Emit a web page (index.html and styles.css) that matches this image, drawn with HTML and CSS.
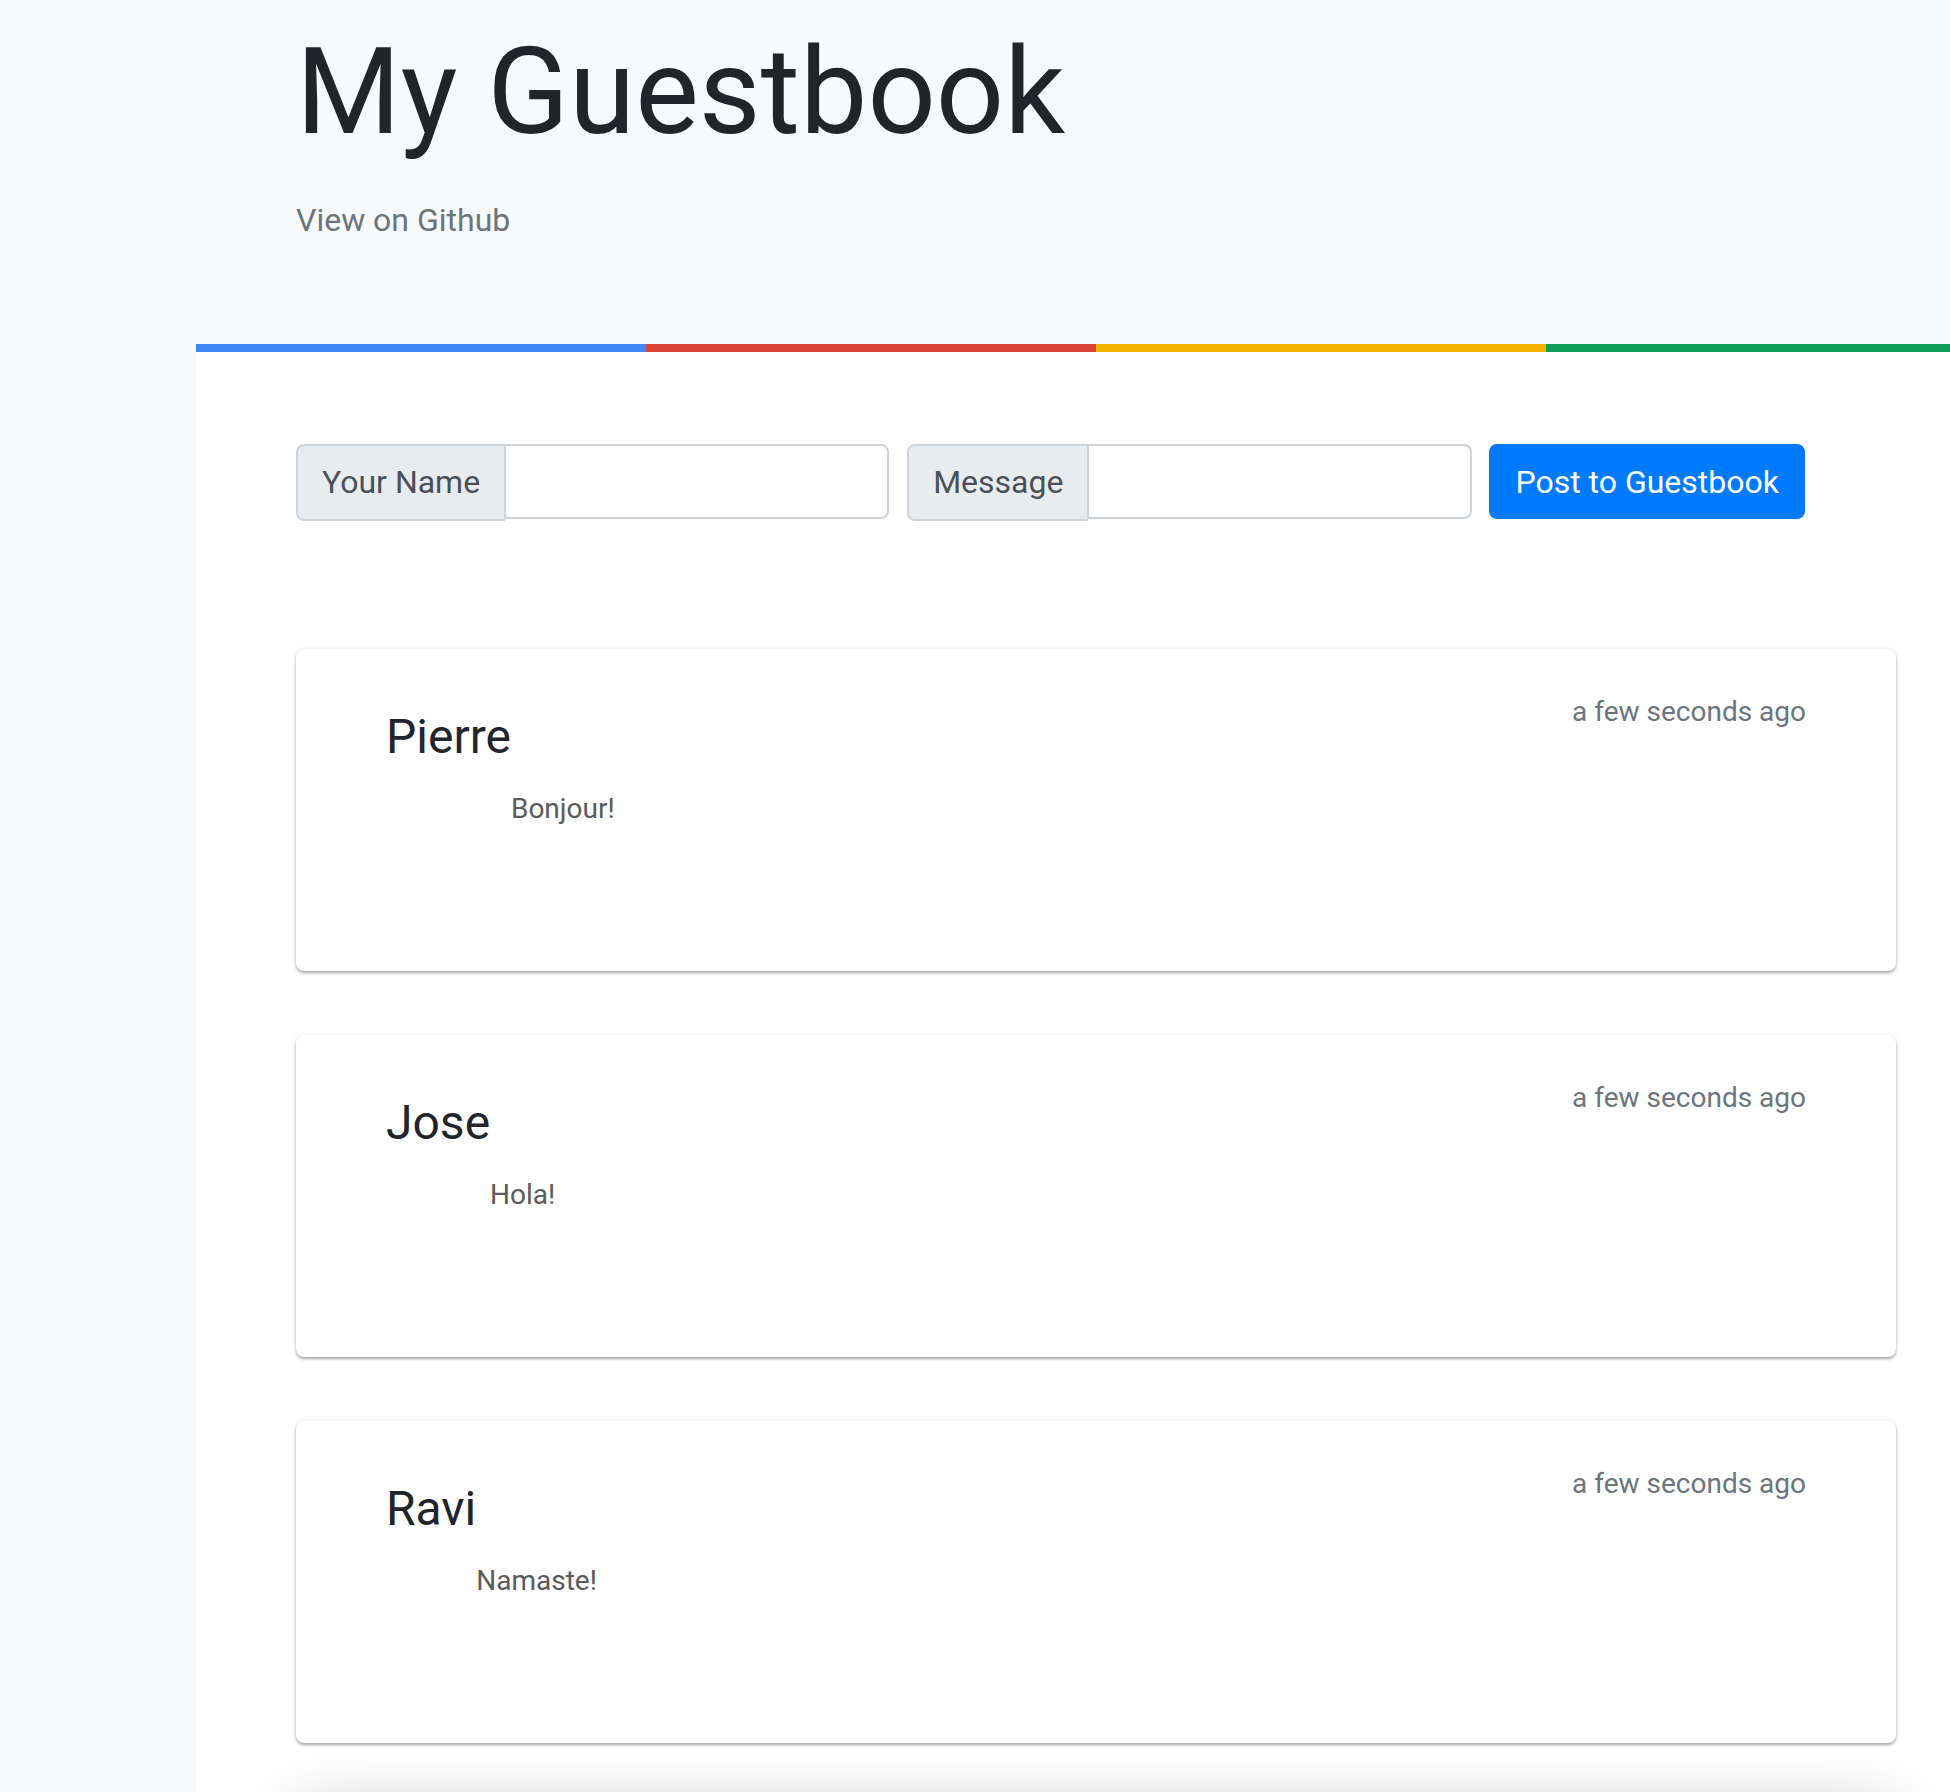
FILE: index.html
```html
<!DOCTYPE html>
<html lang="en">
<head>
<meta charset="utf-8">
<title>My Guestbook</title>
<link rel="stylesheet" href="styles.css">
</head>
<body>
<header class="masthead">
  <h1 class="masthead-title">My Guestbook</h1>
  <a class="masthead-link" href="#">View on Github</a>
</header>
<main class="sheet">
  <div class="sheet-bar"></div>
  <div class="sheet-body">
    <form class="post-form">
      <div class="input-group">
        <span class="input-addon">Your Name</span>
        <input class="input-field" type="text">
      </div>
      <div class="input-group input-group-msg">
        <span class="input-addon">Message</span>
        <input class="input-field" type="text">
      </div>
      <button class="btn-primary" type="button">Post to Guestbook</button>
    </form>
    <section class="entries">
      <article class="entry">
        <h4 class="entry-name">Pierre</h4>
        <p class="entry-msg">Bonjour!</p>
        <small class="entry-time">a few seconds ago</small>
      </article>
      <article class="entry">
        <h4 class="entry-name">Jose</h4>
        <p class="entry-msg">Hola!</p>
        <small class="entry-time">a few seconds ago</small>
      </article>
      <article class="entry">
        <h4 class="entry-name">Ravi</h4>
        <p class="entry-msg">Namaste!</p>
        <small class="entry-time">a few seconds ago</small>
      </article>
      <div class="entry entry-next" aria-hidden="true"></div>
    </section>
  </div>
</main>
</body>
</html>
```

FILE: styles.css
```css
html, body {
  margin: 0;
  padding: 0;
}
body {
  background: #f8f9fa;
  font-family: Roboto, "Liberation Sans", Arial, sans-serif;
  color: #212529;
  overflow: hidden;
}
.masthead {
  padding: 20px 0 100px 296px;
}
.masthead-title {
  margin: 0;
  font-size: 120px;
  font-weight: 400;
  line-height: 1.2;
  color: #212529;
}
.masthead-link {
  display: inline-block;
  margin-top: 32px;
  font-size: 32px;
  line-height: 1.5;
  color: #6c757d;
  text-decoration: none;
}
.sheet {
  margin-left: 196px;
  width: 1800px;
  background: #fff;
}
.sheet-bar {
  height: 8px;
  background: linear-gradient(to right,
    #4285f4 0, #4285f4 25%,
    #db4437 25%, #db4437 50%,
    #f4b400 50%, #f4b400 75%,
    #0f9d58 75%, #0f9d58 100%);
}
.sheet-body {
  padding: 92px 100px 0;
}
.post-form {
  display: flex;
  align-items: stretch;
}
.input-group {
  display: flex;
  margin-right: 18px;
}
.input-group-msg {
  margin-right: 17px;
}
.input-addon {
  display: flex;
  align-items: center;
  padding: 12px 24px;
  font-size: 32px;
  line-height: 49px;
  color: #495057;
  background: #e9ecef;
  border: 2px solid #ced4da;
  border-right-width: 1px;
  border-radius: 8px 0 0 8px;
}
.input-field {
  width: 384px;
  box-sizing: border-box;
  height: 75px;
  margin: 0;
  padding: 0 24px;
  font-family: inherit;
  font-size: 32px;
  border: 2px solid #ced4da;
  border-left-width: 1px;
  border-radius: 0 8px 8px 0;
  background: #fff;
  outline: none;
}
.btn-primary {
  height: 75px;
  box-sizing: border-box;
  margin: 0;
  padding: 0 24px;
  font-family: inherit;
  font-size: 32px;
  line-height: 1.5;
  color: #fff;
  background: #007bff;
  border: 2px solid #007bff;
  border-radius: 8px;
}
.entries {
  margin-top: 128px;
  display: flex;
  flex-direction: column;
  gap: 64px;
}
.entry {
  display: flex;
  align-items: flex-start;
  min-height: 322px;
  box-sizing: border-box;
  padding: 42px 90px 0 90px;
  background: #fff;
  border-radius: 8px;
  box-shadow: 0 2px 3px rgba(0, 0, 0, 0.32), 0 0 6px rgba(0, 0, 0, 0.07);
}
.entry-name {
  margin: 17px 0 0;
  font-size: 48px;
  font-weight: 400;
  line-height: 1.2;
  color: #212529;
}
.entry-msg {
  margin: 97px 0 0;
  font-size: 28px;
  line-height: 1.5;
  color: #5a5a5a;
}
.entry-time {
  margin-left: auto;
  font-size: 28px;
  line-height: 1.5;
  color: #6c757d;
}
.entry-next {
  box-shadow: 0 0 60px rgba(0, 0, 0, 0.22);
}
```
